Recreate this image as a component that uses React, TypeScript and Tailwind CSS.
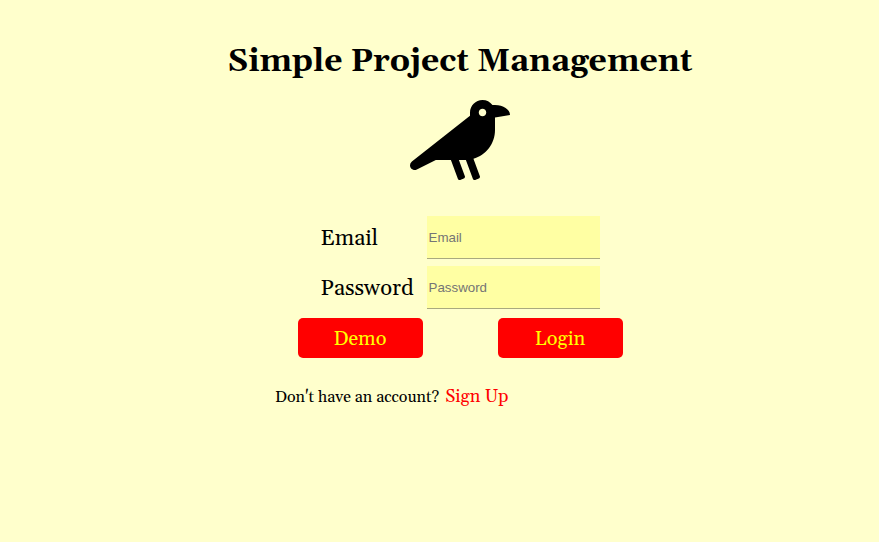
import { FaCrow } from "react-icons/fa";

const fields = [
  { label: "Email", type: "email" },
  { label: "Password", type: "password" },
];

export default function App() {
  return (
    <main className="flex h-[542px] w-full flex-col overflow-hidden bg-[#ffffcc] pl-[41px] font-['Georgia','Gelasio','Liberation_Serif',serif] text-black">
      <h1 className="mt-10 h-11 self-center whitespace-nowrap text-[32px] font-bold leading-[44px]">
        Simple Project Management
      </h1>
      <FaCrow className="mt-4 h-20 w-[100px] self-center" />
      <form className="mt-[36px] flex w-[325px] flex-col self-center">
        <div className="flex flex-col gap-[7px] pl-[23px]">
          {fields.map((f) => (
            <label key={f.label} className="flex h-[43px] items-center text-[22px]">
              <span className="w-[106px] pt-[3px]">{f.label}</span>
              <input
                type={f.type}
                placeholder={f.label}
                className="h-[43px] w-[173px] border-b border-[#a9a97f] bg-[#ffffa3] px-[2px] font-['Liberation_Sans',sans-serif] text-[13.333px] placeholder:text-[#757575]"
              />
            </label>
          ))}
        </div>
        <div className="mt-[9px] flex justify-between text-xl text-[#ffff00]">
          <button type="button" className="h-10 w-[125px] rounded-[5px] bg-[#ff0000] pt-[2px]">Demo</button>
          <button type="button" className="h-10 w-[125px] rounded-[5px] bg-[#ff0000] pt-[2px]">Login</button>
        </div>
      </form>
      <p className="mt-[27px] flex items-baseline gap-[6px] whitespace-nowrap pl-[234px] text-base leading-6">
        <span>Don't have an account?</span>
        <a className="text-lg leading-6 text-[#ff0000]">Sign Up</a>
      </p>
    </main>
  );
}
